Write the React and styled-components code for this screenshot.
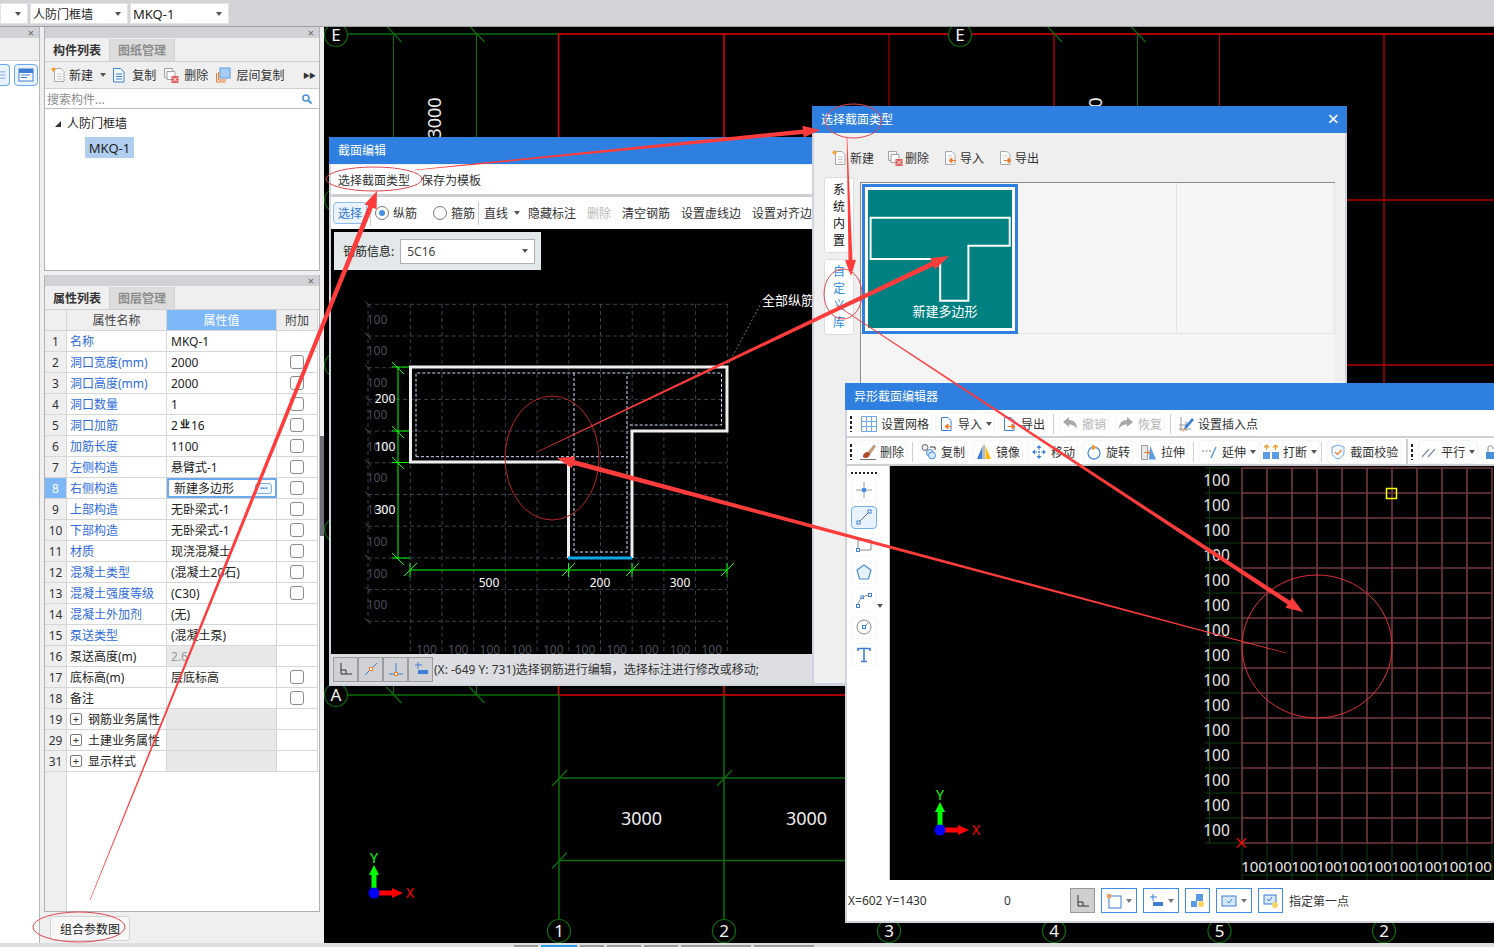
import React from "react";
import styled, { createGlobalStyle } from "styled-components";

const BLUE = "#2e7fe0";
const FONT = `"Noto Sans", "Noto Sans CJK SC", sans-serif`;

const Global = createGlobalStyle`
  html, body { margin: 0; padding: 0; background: #dcdde0; overflow: hidden; }
  * { box-sizing: border-box; }
  body { font-family: ${FONT}; font-size: 12px; color: #222; }
`;

const Page = styled.div`
  position: relative; width: 1494px; height: 947px; overflow: hidden;
  display: flex; flex-direction: column; background: #efefef;
`;
const TopBar = styled.div`
  height: 27px; flex: none; display: flex; gap: 2px; padding-top: 3px;
  background: #d2d4d8; border-bottom: 1px solid #9c9ea2;
`;
const Select = styled.div`
  width: ${p => p.$w}px; height: 21px; background: #fff; border: 1px solid #e4e4e4;
  display: flex; align-items: center; justify-content: space-between;
  padding: 0 6px 0 2px; font-size: 12px; color: #222; white-space: nowrap;
`;
const Latin = styled.span`font-size: 13px;`;
const Caret = styled.i`
  display: inline-block; width: 0; height: 0; flex: none; margin-left: ${p => p.$ml || 0}px;
  border-left: 3.5px solid transparent; border-right: 3.5px solid transparent;
  border-top: 4px solid ${p => p.$c || "#555"};
`;
const Workspace = styled.div`flex: 1; display: flex; min-height: 0;`;
const BottomBar = styled.div`
  height: 4px; flex: none; background: #dcdde0; display: flex; gap: 3px; padding: 2px 0 0 514px;
`;
const BottomTab = styled.i`
  display: block; width: ${p => p.$w}px; height: 2px; background: ${p => p.$on ? "#2e9be8" : "#9a9a9a"};
`;
const Stub = styled.div`
  width: 40px; flex: none; background: #fff; border-right: 1px solid #b4b6ba;
  display: flex; flex-direction: column;
`;
const PanelHead = styled.div`
  height: 11px; flex: none; background: #d0d2d6; display: flex; justify-content: flex-end;
  align-items: center; padding-right: 5px; font-size: 11px; line-height: 11px; color: #666;
`;
const StubBand = styled.div`height: 23px; flex: none; background: #efefef; border-bottom: 1px solid #cfcfcf;`;
const StubTools = styled.div`
  display: flex; justify-content: flex-end; gap: 4px; padding: 3px 1px 0 0;
`;
const StubBtn = styled.div`
  width: ${p => p.$w}px; height: 22px; border: 1px solid #69a8ec; border-left-width: ${p => p.$cut ? 0 : 1}px;
  border-radius: ${p => p.$cut ? "0 4px 4px 0" : "4px"}; background: #eaf3fe;
  display: flex; align-items: center; justify-content: center;
`;
const Sidebar = styled.div`
  width: 276px; flex: none; margin-left: 4px; display: flex; flex-direction: column;
`;
const Panel = styled.div`
  height: ${p => p.$h}px; flex: none; display: flex; flex-direction: column;
  margin-top: ${p => p.$mt || 0}px; background: #fff;
  border: 1px solid #b0b2b6; border-top: 0;
`;
const Tabs = styled.div`
  height: 24px; flex: none; display: flex; background: #efefef; border-bottom: 1px solid #cfcfcf; padding-top: 1px;
`;
const Tab = styled.div`
  width: 65px; display: flex; align-items: center; justify-content: center; font-weight: 700; font-size: 12px;
  color: ${p => p.$on ? "#333" : "#8d8d8d"}; background: ${p => p.$on ? "#f0f0f0" : "#dcdcdc"};
  border-right: 1px solid #d0d0d0;
`;
const SideTools = styled.div`
  height: 27px; flex: none; display: flex; align-items: center; background: #efefef;
  border-bottom: 1px solid #cfcfcf; padding-left: 6px; gap: 5px; position: relative;
`;
const More = styled.span`
  margin-left: auto; margin-right: 4px; font-size: 7px; color: #333; letter-spacing: -1px;
`;
const Search = styled.div`
  height: 20px; flex: none; display: flex; align-items: center; justify-content: space-between;
  padding: 0 6px 0 2px; color: #8d8d8d; border-bottom: 1px solid #bdbdbd; background: #fff;
`;
const Tree = styled.div`flex: 1; padding: 2px 0 0 10px; background: #fff;`;
const TreeRow = styled.div`height: 24px; margin-bottom: 2px; display: flex; align-items: center; gap: 6px;`;
const TreeMark = styled.i`
  width: 0; height: 0; border-left: 6px solid transparent; border-bottom: 6px solid #333; margin-top: 2px;
`;
const TreeLeaf = styled.div`
  margin-left: 30px; width: 49px; height: 21px; background: #b0cff0; display: flex; align-items: center; justify-content: center;
  color: #222; font-size: 13px;
`;
const Row = styled.div`
  display: grid; grid-template-columns: 22px 100px 110px 41px; height: 21px; flex: none;
  border-bottom: 1px solid #d6d6d6; width: 273px;
`;
const HeadCell = styled.div`
  display: flex; align-items: center; justify-content: center; font-size: 12px;
  background: ${p => p.$on ? "#7db7f8" : "#efefef"}; color: ${p => p.$on ? "#fff" : "#444"};
  border-right: 1px solid #d6d6d6;
`;
const Idx = styled.div`
  display: flex; align-items: center; justify-content: center; font-size: 12px;
  background: ${p => p.$on ? "#7db7f8" : "#efefef"}; color: ${p => p.$on ? "#fff" : "#333"};
  border-right: 1px solid #d6d6d6;
`;
const NameCell = styled.div`
  display: flex; align-items: center; gap: 6px; padding-left: 3px; white-space: nowrap; font-size: 12px;
  color: ${p => p.$link ? "#2f6bdc" : "#222"}; border-right: 1px solid #d6d6d6;
`;
const ValCell = styled.div`
  display: flex; align-items: center; padding-left: 4px; white-space: nowrap; font-size: 12px;
  color: ${p => p.$dim ? "#999" : "#222"}; background: ${p => p.$grey ? "#e8e8e8" : "#fff"};
  border-right: 1px solid #d6d6d6; position: relative;
  ${p => p.$sel && `outline: 2px solid #6aa9ee; outline-offset: -2px; padding-left: 7px; justify-content: space-between; padding-right: 4px;`}
`;
const DotsBtn = styled.span`
  width: 17px; height: 11px; border: 1px solid #7db0ea; border-radius: 3px; color: #3477d0; font-size: 10px; font-weight: 700;
  line-height: 8px; text-align: center; background: #eef5fd; letter-spacing: -.5px;
`;
const AddCell = styled.div`
  display: flex; align-items: center; justify-content: center; border-right: 1px solid #d6d6d6; background: #fff;
`;
const Check = styled.i`
  display: block; width: 14px; height: 14px; border: 1px solid #8b8b8b; border-radius: 3px; background: #fff;
`;
const Expand = styled.i`
  display: flex; width: 12px; height: 12px; border: 1px solid #777; border-radius: 2px; font-style: normal;
  align-items: center; justify-content: center; font-size: 11px; line-height: 10px; color: #333; flex: none;
`;
const Sym = styled.span`font-size: 10px; margin: -3px 1px 0 2px; font-weight: 700;`;
const Filler = styled.div`
  flex: 1; width: 22px; background: #efefef; border-right: 1px solid #d6d6d6;
`;
const BtnRow = styled.div`height: 31px; flex: none; padding: 4px 0 0 6px; background: #efefef;`;
const ParamBtn = styled.div`
  width: 80px; height: 25px; background: #f7f7f7; border: 1px solid #d4d4d4; border-radius: 3px;
  display: flex; align-items: center; justify-content: center; color: #222;
`;
const Gutter = styled.div`width: 4px; flex: none; background: #efefef; padding-top: 409px;`;
const GutterHandle = styled.div`height: 100px; background: #6d7077;`;
const Canvas = styled.div`flex: 1; background: #000; min-width: 0;`;
const Drawing = styled.svg`display: block;`;
const IconSvg = styled.svg`display: block; flex: none;`;

const Win = styled.div`
  position: absolute; left: ${p => p.$x}px; top: ${p => p.$y}px; width: ${p => p.$w}px; height: ${p => p.$h}px;
  z-index: ${p => p.$z}; background: #efefef; display: flex; flex-direction: column;
  border-left: 2px solid #cfd3dc; border-right: 2px solid #cfd3dc; border-bottom: 2px solid #cfd3dc;
`;
const TitleBar = styled.div`
  height: 27px; flex: none; margin: 0 -2px; background: ${BLUE}; color: #fff; font-size: 12px;
  display: flex; align-items: center; justify-content: space-between; padding: 0 8px 2px 9px;
`;
const CloseX = styled.span`font-size: 20px; line-height: 20px; color: #fff;`;
const MenuRow = styled.div`
  height: 32px; flex: none; background: #fff; border-bottom: 3px solid #cdd0d5; display: flex; align-items: center;
  padding: 1px 0 0 7px; gap: 11px; margin-top: 1px;
`;
const W1Tools = styled.div`
  height: 32px; flex: none; background: #fff; display: flex; align-items: center; padding-left: 2px; white-space: nowrap; overflow: hidden;
`;
const Plain = styled.span`margin-left: ${p => p.$ml || 0}px; color: ${p => p.$dim ? "#b9b9b9" : "#333"}; flex: none; display: inline-flex; align-items: center;`;
const ActiveTool = styled.span`
  width: 34px; height: 22px; display: inline-flex; align-items: center; justify-content: center; flex: none;
  border: 1px solid #8dbcf0; border-radius: 4px; background: #eaf3fe; color: #2f78d4;
`;
const Radio = styled.i`
  width: 14px; height: 14px; flex: none; border-radius: 50%; border: 1px solid #777; background: #fff; margin-left: ${p => p.$ml}px; margin-right: 4px;
  display: flex; align-items: center; justify-content: center;
  &::after { content: ""; width: 6px; height: 6px; border-radius: 50%; background: ${p => p.$on ? "#4a90e2" : "transparent"}; }
`;
const Sep = styled.i`
  width: 1px; height: ${p => p.$h || 20}px; flex: none; background: #cfcfcf; margin-left: ${p => p.$ml || 0}px;
`;
const W1Canvas = styled.div`flex: 1; position: relative; background: #000; overflow: hidden;`;
const InfoBox = styled.div`
  position: absolute; left: 3px; top: 3px; width: 207px; height: 38px; background: #e3e8ea;
  display: flex; align-items: center; padding-left: 9px; gap: 6px; color: #222;
`;
const InfoSelect = styled.div`
  width: 135px; height: 25px; background: #fff; border: 1px solid #b0b0b0; display: flex; align-items: center;
  justify-content: space-between; padding: 0 6px; color: #444;
`;
const W1Status = styled.div`
  height: 30px; flex: none; background: #dddee2; display: flex; align-items: center; padding-left: 2px; color: #222; white-space: nowrap; font-size: 12px;
`;
const StatusBtn = styled.div`
  width: 25px; height: 25px; flex: none; border: 1px solid #9d9d9d; background: #d0d1d5; display: flex; align-items: center; justify-content: center;
`;
const W2Tools = styled.div`
  height: 49px; flex: none; padding-left: 18px; display: flex; align-items: center; gap: 13px;
`;
const W2Tool = styled.div`display: flex; align-items: center; gap: 2px; color: #333; margin-left: ${p => p.$ml || 0}px;`;
const W2Body = styled.div`flex: 1; display: flex; padding-left: 10px; min-height: 0;`;
const SideCol = styled.div`width: 36px; flex: none; display: flex; flex-direction: column; gap: 6px; margin-top: -5px;`;
const SideTab = styled.div`
  width: 30px; height: ${p => p.$h}px; background: #fff; border: 1px solid #ddd; border-radius: 3px;
  display: flex; flex-direction: column; align-items: center; justify-content: center; line-height: 17px;
  color: ${p => p.$on ? "#2f8fe8" : "#111"}; font-size: 12px;
`;
const Gallery = styled.div`
  width: 475px; height: 210px; background: #f5f5f5; border-top: 1px solid #8a8c90; border-left: 1px solid #8a8c90;
  display: grid; grid-template-columns: 157px 159px 158px; grid-template-rows: 151px 1fr;
`;
const Cell = styled.div`
  border-right: 1px solid #e2e2e2; border-bottom: 1px solid #e2e2e2; padding: 1px 0 0 1px;
`;
const SelFrame = styled.div`
  width: 156px; height: 150px; border: 3px solid ${BLUE}; background: #fff; padding: 3px;
`;
const Thumb = styled.div`
  position: relative; width: 144px; height: 138px; background: #008080; overflow: hidden;
`;
const ThumbText = styled.span`
  position: absolute; left: 0; width: 154px; top: 111px; text-align: center; color: #fff; font-size: 13px;
`;
const W3Tools = styled.div`
  height: 28px; flex: none; background: #fff; display: flex; align-items: center; gap: ${p => p.$gap}px;
  border-bottom: 2px solid #cdd0d5; white-space: nowrap; overflow: hidden; padding: 2px 0 0 3px;
`;
const Grip = styled.i`
  width: 2px; height: 16px; flex: none; margin-right: ${p => p.$mr || 0}px; margin-left: ${p => p.$ml || 0}px;
  background-image: repeating-linear-gradient(to bottom, #222 0 3px, transparent 3px 5px);
`;
const Tool = styled.div`
  display: inline-flex; align-items: center; flex: none; height: 24px; padding: 0 2px; gap: 4px; margin-left: ${p => p.$ml || 0}px;
  border: 1px solid #f6f6f6; border-radius: 3px; color: ${p => p.$dim ? "#b5b5b5" : "#333"}; font-size: 12px;
`;
const EndBar = styled.i`width: 2px; height: 26px; flex: none; background: #cdd0d5;`;
const W3Body = styled.div`flex: 1; display: flex; min-height: 0;`;
const ToolCol = styled.div`
  width: 43px; flex: none; background: #fff; border-right: 1px solid #c8c8c8; display: flex; flex-direction: column;
  align-items: flex-start; gap: 4px; padding: 6px 0 0 4px;
`;
const DotGrip = styled.i`
  width: 26px; height: 2px; flex: none; 
  background-image: repeating-linear-gradient(to right, #222 0 2px, transparent 2px 4px);
`;
const ColBtn = styled.div`
  width: 26px; height: 23.5px; flex: none; display: flex; align-items: center; justify-content: center; position: relative;
  border: 1px solid ${p => p.$on ? "#73aef0" : "#f6f6f6"}; border-radius: 4px; background: ${p => p.$on ? "#e8f2fd" : "#fff"};
`;
const ColCaret = styled.span`position: absolute; right: -7px; top: 6px;`;
const W3Canvas = styled.div`flex: 1; background: #000; min-width: 0;`;
const W3Status = styled.div`
  height: 43px; flex: none; background: #fff; display: flex; align-items: center; gap: 6px; padding-left: 1px; border-bottom: 2px solid #cfd3dc; color: #333;
  margin-bottom: -2px;
`;
const Coord = styled.span`width: ${p => p.$w}px; flex: none; white-space: nowrap;`;
const StBtn = styled.div`
  width: ${p => p.$w}px; height: 25px; flex: none; display: flex; align-items: center; justify-content: center; gap: 4px;
  border: 1px solid ${p => p.$on ? "#999" : "#3d8fe6"}; background: ${p => p.$on ? "#cfcfcf" : "#fff"};
`;
const Overlay = styled.svg`
  position: absolute; left: 0; top: 0; width: 1494px; height: 947px; z-index: 9; pointer-events: none;
`;

/* ---------- icons ---------- */
const I = ({ s = 16, children }) => (
  <IconSvg width={s} height={s} viewBox="0 0 16 16" fill="none">{children}</IconSvg>
);
const Page16 = ({ c = "#a8a8a8" }) => (
  <path d="M3.500 1.500h6.500l3 3v10h-9.500z" fill="#fbfbfb" stroke={c} />
);
const NewIcon = () => (
  <I><Page16 /><path d="M6 7h5M6 9.500h5M6 12h5" stroke="#c8c8c8" /><path d="M1 1h3v3H1z" fill="#f6a53c" /><path d="M0 2.500h5M2.500 0v5" stroke="#f39c2d" strokeWidth=".7" /></I>
);
const CopyIcon = () => (
  <I><path d="M2.500 1.500h7l3.500 3.500v10h-10.500z" fill="#f4f8fe" stroke="#3d7fd4" /><path d="M5 7h6M5 9.500h6M5 12h6" stroke="#3d7fd4" /></I>
);
const DelIcon = () => (
  <I><path d="M1.500 1.500h8v9h-8z" fill="#f5f5f5" stroke="#a3a3a3" /><path d="M4 4.500h8v8h-8z" fill="#fbfbfb" stroke="#a3a3a3" /><rect x="8.500" y="9" width="7" height="7" fill="#e05a5a" /><path d="M10 10.500l4 4M14 10.500l-4 4" stroke="#fff" /></I>
);
const LayerIcon = () => (
  <I><path d="M1.500 6v9h9" stroke="#f07d2a" strokeWidth="1" /><path d="M3.500 5v8h8" stroke="#f07d2a" /><rect x="5" y="1" width="10" height="10" fill="#a8cdf5" stroke="#5a9be3" /></I>
);
const ImportIcon = ({ blue }) => (
  <I><Page16 c={blue ? "#3d7fd4" : "#a8a8a8"} />{!blue && <path d="M6 6h4M6 8.500h1" stroke="#c8c8c8" />}<path d="M14 10.500H10M10 8l-3 2.500 3 2.500z" fill="#f07d2a" stroke="#f07d2a" /></I>
);
const ExportIcon = ({ blue }) => (
  <I><Page16 c={blue ? "#3d7fd4" : "#a8a8a8"} />{!blue && <path d="M6 6h4M6 8.500h1" stroke="#c8c8c8" />}<path d="M7 10.500h4M11 8l3 2.500-3 2.500z" fill="#f07d2a" stroke="#f07d2a" /></I>
);
const SearchIcon = () => (
  <I s={12}><circle cx="6.500" cy="6.500" r="4" stroke="#4a90d6" strokeWidth="2" /><path d="M10 10l4 4" stroke="#4a90d6" strokeWidth="2.500" /></I>
);
const GridIcon = () => (
  <I><path d="M.500.500h15v15H.500zM5.500.500v15M10.500.500v15M.500 5.500h15M.500 10.500h15" stroke="#6ea6e6" /></I>
);
const UndoIcon = ({ flip }) => (
  <I><g transform={flip ? "translate(16 0) scale(-1 1)" : undefined}><path d="M1 6l6-5v3c5 0 8 3 8 9-1.500-3-4-4.500-8-4.500V11z" fill="#a8a8a8" /></g></I>
);
const InsertIcon = () => (
  <I><path d="M3 1v14M8 5v10M1 9h9M1 13h12" stroke="#9a9a9a" /><path d="M7 10l7-8 2 2-7 8-3 1z" fill="#3d7fd4" /><path d="M5 15.500l2-3" stroke="#f07d2a" /></I>
);
const BrushIcon = () => (
  <I><path d="M8 8l6-7 1.500 1.500L10 10z" fill="#c9a27a" stroke="#8a6a45" strokeWidth=".5" /><path d="M8 8c-3 0-5 2-5 5l2 1c3 0 5-2 5-4z" fill="#b5482a" /><path d="M0 15.500h16" stroke="#777" /></I>
);
const DupIcon = () => (
  <I><circle cx="4" cy="3.500" r="3" fill="#eee" stroke="#666" /><circle cx="9" cy="9" r="3.500" fill="#d6e8fb" stroke="#4a90d6" /><circle cx="11" cy="11.500" r="3.500" fill="#d6e8fb" stroke="#4a90d6" /><path d="M9 3h5v3" stroke="#333" /></I>
);
const MirrorIcon = () => (
  <I><path d="M6.500 2v13H1z" fill="#3d7fd4" /><path d="M9.500 2v13H15z" fill="#f9b80c" /><path d="M8 1v14.500" stroke="#777" /></I>
);
const MoveIcon = () => (
  <I><path d="M8 1l2.500 3h-5zM8 15l2.500-3h-5zM1 8l3-2.500v5zM15 8l-3-2.500v5z" fill="#3d7fd4" /><path d="M4 8h8M8 4v8" stroke="#3d7fd4" strokeDasharray="2 1" /></I>
);
const RotateIcon = () => (
  <I><circle cx="8" cy="9" r="6" stroke="#4a90d6" strokeWidth="1.300" /><path d="M6 .500l5 3-5 3z" fill="#f39c2d" /></I>
);
const StretchIcon = () => (
  <I><path d="M.500 1.500h6v14h-6z" fill="#e9e9e9" stroke="#9a9a9a" /><path d="M9 1.500l6 14H8z" fill="#5a9be3" /><path d="M3 8.500h6M7 6.500l2 2-2 2" stroke="#f07d2a" /></I>
);
const ExtendIcon = () => (
  <I><path d="M0 7h10" stroke="#777" strokeDasharray="2 1.500" /><path d="M9 14l5-11" stroke="#4a90d6" strokeWidth="1.300" /></I>
);
const BreakIcon = () => (
  <I><rect x="0" y="8" width="7" height="7" fill="#5a9be3" /><rect x="9" y="8" width="7" height="7" fill="#5a9be3" /><path d="M3.500 1v5M1 3.500l2.500-2.500 2.500 2.500M12.500 1v5M10 3.500L12.500 1 15 3.500" stroke="#f39c2d" strokeWidth="1.200" /></I>
);
const ShieldIcon = () => (
  <I><path d="M8 1l6 2v5c0 3.500-2.500 6-6 7-3.500-1-6-3.500-6-7V3z" fill="#f2f7fd" stroke="#6ea6e6" /><path d="M5 8l2.500 2.500L11.500 6" stroke="#f07d2a" strokeWidth="1.200" /></I>
);
const ParallelIcon = () => (
  <I><path d="M1 13L8 5M7 13l7-8" stroke="#7a8eaa" strokeWidth="1.200" /></I>
);
const LockIcon = () => (
  <I><rect x="3" y="8" width="9" height="7" fill="#4a90d6" /><path d="M5 8V4c0-3 5-3 5 0v1" stroke="#888" /></I>
);
const PointTool = () => (
  <I><path d="M0 8h5M11 8h5M8 0v5M8 11v5" stroke="#9a9a9a" /><circle cx="8" cy="8" r="2.500" fill="#4a90e2" /></I>
);
const LineTool = () => (
  <I><path d="M3 13L13 3" stroke="#666" /><rect x="1" y="12" width="3" height="3" fill="#fff" stroke="#3d7fd4" /><rect x="12" y="1" width="3" height="3" fill="#fff" stroke="#3d7fd4" /></I>
);
const RectTool = () => (
  <I><path d="M2 3h13v10H2z" stroke="#888" /><rect x=".500" y="11.500" width="3" height="3" fill="#fff" stroke="#3d7fd4" /></I>
);
const PentaTool = () => (
  <I><path d="M8 1l7 5-2.500 9h-9L1 6z" fill="#e8f2fd" stroke="#4a90d6" strokeWidth="1.200" /></I>
);
const ArcTool = () => (
  <I><path d="M2 14C2 8 7 3 14 3" stroke="#888" /><rect x=".500" y="12.500" width="3" height="3" fill="#fff" stroke="#3d7fd4" /><rect x="5" y="4" width="2.500" height="2.500" fill="#fff" stroke="#3d7fd4" /><rect x="12.500" y="1.500" width="3" height="3" fill="#fff" stroke="#3d7fd4" /></I>
);
const CircleTool = () => (
  <I><circle cx="8" cy="8" r="7" stroke="#888" /><path d="M8 8l4-4" stroke="#888" /><rect x="6.500" y="6.500" width="3" height="3" fill="#fff" stroke="#3d7fd4" /></I>
);
const TTool = () => (
  <I><path d="M2 4V1.500h12V4M8 1.500v13M5 14.500h6" stroke="#3d7fd4" strokeWidth="1.600" /></I>
);

/* ---------- data ---------- */
const rows = [
  ["1", "名称", "MKQ-1", 1, 0],
  ["2", "洞口宽度(mm)", "2000", 1, 1],
  ["3", "洞口高度(mm)", "2000", 1, 1],
  ["4", "洞口数量", "1", 1, 1],
  ["5", "洞口加筋", "rebar", 1, 1],
  ["6", "加筋长度", "1100", 1, 1],
  ["7", "左侧构造", "悬臂式-1", 1, 1],
  ["8", "右侧构造", "新建多边形", 1, 1, "sel"],
  ["9", "上部构造", "无卧梁式-1", 1, 1],
  ["10", "下部构造", "无卧梁式-1", 1, 1],
  ["11", "材质", "现浇混凝土", 1, 1],
  ["12", "混凝土类型", "(混凝土20石)", 1, 1],
  ["13", "混凝土强度等级", "(C30)", 1, 1],
  ["14", "混凝土外加剂", "(无)", 1, 0],
  ["15", "泵送类型", "(混凝土泵)", 1, 0],
  ["16", "泵送高度(m)", "2.6", 0, 0, "dim"],
  ["17", "底标高(m)", "层底标高", 0, 1],
  ["18", "备注", "", 0, 1],
  ["19", "钢筋业务属性", "", 0, 0, "group"],
  ["29", "土建业务属性", "", 0, 0, "group"],
  ["31", "显示样式", "", 0, 0, "group"],
];

const range = (n) => Array.from({ length: n }, (_, i) => i);

/* ---------- main CAD background ---------- */
const G = "#0b6e0b";
const R = "#e00000";
const Slash = ({ x, y, d = 1 }) => (
  <line x1={x - 7} y1={y - 8 * d} x2={x + 8} y2={y + 8 * d} stroke={G} strokeWidth="1.200" />
);
const Bubble = ({ x, y, t, fs = 17 }) => (
  <g>
    <circle cx={x} cy={y} r="11.500" fill="#000" stroke={G} strokeWidth="1.200" />
    <text x={x} y={y + 6} textAnchor="middle" fill="#f4f4f4" fontSize={fs} fontFamily={FONT}>{t}</text>
  </g>
);
const Axes = ({ x, y, lf = 14 }) => (
  <g>
    <path d={`M${x} ${y}V${y - 20}`} stroke="#00ff00" strokeWidth="5" />
    <path d={`M${x - 5} ${y - 18}L${x} ${y - 28}L${x + 5} ${y - 18}z`} fill="#00ff00" />
    <path d={`M${x} ${y}H${x + 20}`} stroke="#ff0000" strokeWidth="5" />
    <path d={`M${x + 18} ${y - 5}L${x + 29} ${y}L${x + 18} ${y + 5}z`} fill="#ff0000" />
    <circle cx={x} cy={y} r="5.500" fill="#0000ff" />
    <text x={x} y={y - 30} textAnchor="middle" fill="#00ff00" fontSize={lf} fontFamily={FONT}>Y</text>
    <text x={x + 36} y={y + 5} textAnchor="middle" fill="#ff0000" fontSize={lf} fontFamily={FONT}>X</text>
  </g>
);
const MainCad = () => (
  <Drawing width="1170" height="916" viewBox="324 27 1170 916" fill="none">
    {[393.5, 476.5].map(x => <path key={x} d={`M${x} 34V140`} stroke={G} strokeWidth="1" />)}
    <path d="M324 34H558" stroke={G} strokeWidth="1.500" />
    <path d="M558 34H1494" stroke={R} strokeWidth="1.500" />
    <path d="M558.500 34V695" stroke={R} strokeWidth="1.500" />
    <path d="M724 34V695" stroke={R} strokeWidth="1.500" />
    {[889, 1054, 1219.5, 1384].map((x, i) => <path key={x} d={`M${x} 34V400`} stroke={i === 1 || i === 3 ? "#ff0000" : "#c00000"} strokeWidth="1" />)}
    <path d="M1137.500 34V140" stroke={G} strokeWidth="1" />
    <path d="M558 200H1494M558 365H1494" stroke="#b00000" strokeWidth="1.500" />
    <path d="M324 695H559" stroke={G} strokeWidth="1.500" />
    <path d="M559 695H1494" stroke={R} strokeWidth="1.500" />
    <path d="M393.500 686V695M476.500 686V695" stroke={G} />
    <path d="M559 695V920M724 695V920" stroke={G} strokeWidth="1.500" />
    <path d="M559 778H1494M559 860.500H1494" stroke={G} strokeWidth="1.300" />
    {[[393.5, 34], [476.5, 34], [1054, 34], [1137.5, 34], [393.5, 695], [476.5, 695]].map(([x, y]) => <Slash key={x + "-" + y} x={x} y={y} />)}
    {[[559, 778], [724, 778], [559, 860.5]].map(([x, y]) => <Slash key={x + "-" + y} x={x} y={y} d={-1} />)}
    {[200, 365, 530].map(y => <circle key={y} cx="336" cy={y} r="11.500" stroke={G} strokeWidth="1.200" />)}
    <Bubble x={336} y={35} t="E" />
    <Bubble x={960} y={35} t="E" />
    <Bubble x={336} y={695} t="A" />
    {[[559, "1"], [724, "2"], [889, "3"], [1054, "4"], [1219.5, "5"], [1384, "2"]].map(([x, t]) => <Bubble key={x} x={x} y={931} t={t} />)}
    <text x="641.500" y="825" textAnchor="middle" fill="#eee" fontSize="18" fontFamily={FONT}>3000</text>
    <text x="806.500" y="825" textAnchor="middle" fill="#eee" fontSize="18" fontFamily={FONT}>3000</text>
    <text transform="translate(441 118) rotate(-90)" textAnchor="middle" fill="#eee" fontSize="18" fontFamily={FONT}>3000</text>
    <text transform="translate(1102 118) rotate(-90)" textAnchor="middle" fill="#eee" fontSize="18" fontFamily={FONT}>3000</text>
    <Axes x={374} y={893} />
  </Drawing>
);

/* ---------- 截面编辑 canvas ---------- */
const gx = range(11).map(i => 410.3 + i * 31.7);
const gy = range(11).map(i => 304.3 + i * 31.7);
const DIM = "#00ff00";
const Gt = ({ x, y, t, c = "#4a4f5a", fs = 12 }) => (
  <text x={x} y={y} textAnchor="middle" fill={c} fontSize={fs} fontFamily={FONT}>{t}</text>
);
const SectionCad = () => (
  <Drawing width="560" height="425" viewBox="331 229 560 425" fill="none">
    <g stroke="#3a404e" strokeWidth="1" strokeDasharray="4 3">
      {gy.map(y => <line key={y} x1="368" y1={y} x2="727" y2={y} />)}
      {gx.map(x => <line key={x} x1={x} y1="304" x2={x} y2="654" />)}
      <line x1="368" y1="304" x2="368" y2="621" />
    </g>
    {gy.map(y => <path key={y} d={`M365 ${y - 3}l6 6`} stroke="#4a4f5a" />)}
    {[324, 355, 387, 419, 451, 482, 514, 546, 578, 609].map(y => <Gt key={y} x={377} y={y} t="100" />)}
    {range(10).map(i => <Gt key={i} x={426.500 + i * 31.700} y={654} t="100" />)}
    <path d="M398 367V558M392 367H410M392 431H410M392 462.500H410M392 558H410" stroke={DIM} />
    <path d="M392 362l12 12M392 426l12 12M392 457l12 12M392 553l12 12" stroke={DIM} />
    <path d="M410 570H727M410 563V577M568.500 563V577M632 563V577M727 563V577" stroke={DIM} />
    <path d="M404 576l13-13M562 576l13-13M626 576l13-13M721 576l13-13" stroke={DIM} />
    <Gt x={385} y={403} t="200" c="#fff" />
    <Gt x={385} y={451} t="100" c="#fff" />
    <Gt x={385} y={514} t="300" c="#fff" />
    <Gt x={489} y={587} t="500" c="#fff" />
    <Gt x={600} y={587} t="200" c="#fff" />
    <Gt x={680} y={587} t="300" c="#fff" />
    <path d="M727 367L760 305" stroke="#777" strokeDasharray="2 2" />
    <text x="762" y="305" fill="#fff" fontSize="13" fontFamily={FONT}>全部纵筋</text>
    <path d="M416 456.700V373H721.500V425H627M416 456.700H627M574 373V552H627V373" stroke="#cfe0ff" strokeDasharray="3 2" />
    <path d="M568.500 558V462H410.500V367H727V431H632V558" stroke="#eee" strokeWidth="3" />
    <path d="M568 558H632" stroke="#11a8e8" strokeWidth="3" />
  </Drawing>
);

/* ---------- 异形截面 canvas ---------- */
const wgx = range(11).map(i => 1242 + i * 25);
const wgy = range(16).map(i => 468 + i * 25);
const ShapeCad = () => (
  <Drawing width="604" height="414" viewBox="890 466 604 414" fill="none">
    <g stroke="#0f3d0f" strokeWidth="1">
      <path d="M1209.500 468V843" />
      {wgy.map(y => <path key={y} d={`M1205 ${y}H1242`} />)}
      {wgx.map(x => <path key={x} d={`M${x} 843V880`} />)}
      <path d="M1242 875H1492" />
    </g>
    <g stroke="#733a40" strokeWidth="1.600">
      {wgx.map(x => <line key={x} x1={x} y1="468" x2={x} y2="843" />)}
      {wgy.map(y => <line key={y} x1="1242" y1={y} x2="1492" y2={y} />)}
    </g>
    {range(15).map(i => <text key={i} x="1216.500" y={486 + i * 25} textAnchor="middle" fill="#e8e8e8" fontSize="15.500" fontFamily={FONT}>100</text>)}
    {range(10).map(i => <text key={i} x={1254 + i * 25} y="872" textAnchor="middle" fill="#e8e8e8" fontSize="15" fontFamily={FONT}>100</text>)}
    <rect x="1386.500" y="488.500" width="10" height="10" stroke="#ffff00" strokeWidth="1.500" />
    <path d="M1237 838.500l9 9M1246 838.500l-9 9" stroke="#ff0000" strokeWidth="1.300" />
    <Axes x={940} y={830} />
  </Drawing>
);

/* ---------- annotation arrows ---------- */
const arrowPts = ([x1, y1], [x2, y2], neck = 4.5, head = 12, len = 16) => {
  const L = Math.hypot(x2 - x1, y2 - y1), ux = (x2 - x1) / L, uy = (y2 - y1) / L, nx = -uy, ny = ux;
  const bx = x2 - ux * len, by = y2 - uy * len;
  const p = (x, y) => `${x.toFixed(1)},${y.toFixed(1)}`;
  return [
    p(x1 + nx * .3, y1 + ny * .3), p(bx + nx * neck / 2, by + ny * neck / 2), p(bx + nx * head / 2, by + ny * head / 2),
    p(x2, y2), p(bx - nx * head / 2, by - ny * head / 2), p(bx - nx * neck / 2, by - ny * neck / 2), p(x1 - nx * .3, y1 - ny * .3),
  ].join(" ");
};
const AC = "#ff3c3c";
const arrows = [
  [[90, 900], [377, 191], 5, 13, 17],
  [[415, 170], [820, 130], 4.5, 12, 17],
  [[847, 138], [851, 276], 4, 11, 16],
  [[537, 452], [949, 256], 5, 12, 18],
  [[836, 305], [1303, 612], 4.5, 12, 17],
  [[1286, 653], [557, 458], 5, 12, 17],
];
const rings = [
  [374, 179, 48, 12, "#e0474f"], [853.5, 121, 28, 17, "#e0474f"], [843, 294, 19, 25, "#e0474f"],
  [1317, 646.5, 75, 71.5, "#e0303a"], [79, 927, 46, 15, "#e0474f"], [552, 458, 47, 62, "#b82428"],
];

export default function App() {
  return (
    <Page>
      <Global />
      <TopBar>
        <Select $w={28}><span /><Caret /></Select>
        <Select $w={98}>人防门框墙<Caret /></Select>
        <Select $w={99}><Latin>MKQ-1</Latin><Caret /></Select>
      </TopBar>
      <Workspace>
        <Stub>
          <PanelHead>×</PanelHead>
          <StubBand />
          <StubTools>
            <StubBtn $w={10} $cut><I s={10}><path d="M0 3h9M0 8h9M0 13h9" stroke="#3d7fd4" /></I></StubBtn>
            <StubBtn $w={24}>
              <I s={16}><rect x="1" y="2" width="14" height="12" fill="#fff" stroke="#3d7fd4" /><rect x="1" y="2" width="14" height="4" fill="#3d7fd4" /><path d="M3 8h9M3 10.500h6" stroke="#3d7fd4" /></I>
            </StubBtn>
          </StubTools>
        </Stub>
        <Sidebar>
          <Panel $h={244}>
            <PanelHead>×</PanelHead>
            <Tabs><Tab $on>构件列表</Tab><Tab>图纸管理</Tab></Tabs>
            <SideTools>
              <W2Tool><NewIcon />新建<Caret $ml={5} /></W2Tool>
              <W2Tool><CopyIcon /><span>&nbsp;复制</span></W2Tool>
              <W2Tool $ml={2}><DelIcon /><span>&nbsp;删除</span></W2Tool>
              <W2Tool $ml={2}><LayerIcon /><span>&nbsp;层间复制</span></W2Tool>
              <More>▶▶</More>
            </SideTools>
            <Search>搜索构件...<SearchIcon /></Search>
            <Tree>
              <TreeRow><TreeMark />人防门框墙</TreeRow>
              <TreeLeaf>MKQ-1</TreeLeaf>
            </Tree>
          </Panel>
          <Panel $h={637} $mt={4}>
            <PanelHead>×</PanelHead>
            <Tabs><Tab $on>属性列表</Tab><Tab>图层管理</Tab></Tabs>
            <Row>
              <HeadCell />
              <HeadCell>属性名称</HeadCell>
              <HeadCell $on>属性值</HeadCell>
              <HeadCell>附加</HeadCell>
            </Row>
            {rows.map(([n, name, val, link, chk, kind]) => (
              <Row key={n}>
                <Idx $on={kind === "sel"}>{n}</Idx>
                <NameCell $link={!!link}>
                  {kind === "group" && <Expand>+</Expand>}
                  {name}
                </NameCell>
                <ValCell $sel={kind === "sel"} $dim={kind === "dim"} $grey={kind === "dim" || kind === "group"}>
                  {val === "rebar" ? <>2<Sym>业</Sym>16</> : val}
                  {kind === "sel" && <DotsBtn>···</DotsBtn>}
                </ValCell>
                <AddCell>{chk ? <Check /> : null}</AddCell>
              </Row>
            ))}
            <Filler />
          </Panel>
          <BtnRow><ParamBtn>组合参数图</ParamBtn></BtnRow>
        </Sidebar>
        <Gutter><GutterHandle /></Gutter>
        <Canvas><MainCad /></Canvas>
      </Workspace>
      <BottomBar>
        <BottomTab $w={24} /><BottomTab $w={36} $on /><BottomTab $w={24} /><BottomTab $w={34} /><BottomTab $w={34} /><BottomTab $w={70} /><BottomTab $w={60} />
      </BottomBar>

      <Win $x={329} $y={137} $w={560} $h={549} $z={1}>
        <TitleBar>截面编辑</TitleBar>
        <MenuRow><Plain>选择截面类型</Plain><Plain>保存为模板</Plain></MenuRow>
        <W1Tools>
          <ActiveTool>选择</ActiveTool>
          <Sep $ml={3} $h={26} />
          <Radio $ml={4} $on />
          <Plain>纵筋</Plain>
          <Radio $ml={16} />
          <Plain>箍筋</Plain>
          <Sep $ml={3} $h={24} />
          <Plain $ml={5}>直线<Caret $ml={6} /></Plain>
          <Plain $ml={8}>隐藏标注</Plain>
          <Plain $ml={11} $dim>删除</Plain>
          <Plain $ml={11}>清空钢筋</Plain>
          <Plain $ml={11}>设置虚线边</Plain>
          <Plain $ml={11}>设置对齐边</Plain>
        </W1Tools>
        <W1Canvas>
          <SectionCad />
          <InfoBox>
            <span>钢筋信息:</span>
            <InfoSelect>5C16<Caret /></InfoSelect>
          </InfoBox>
        </W1Canvas>
        <W1Status>
          <StatusBtn><I><path d="M3 2v11h11M3 9h5v4" stroke="#333" /></I></StatusBtn>
          <StatusBtn><I><path d="M2 14L14 2" stroke="#3d7fd4" /><rect x="6.500" y="6.500" width="3" height="3" fill="#fff" stroke="#f07d2a" /></I></StatusBtn>
          <StatusBtn><I><path d="M1 13h14M8 2v11" stroke="#3d7fd4" /><rect x="6.500" y="11.500" width="3" height="3" fill="#fff" stroke="#f07d2a" /></I></StatusBtn>
          <StatusBtn><I><path d="M2 4h7M5 1v7" stroke="#3d7fd4" /><rect x="5" y="9" width="10" height="4" fill="#3d7fd4" /></I></StatusBtn>
          <Plain $ml={1}>(X: -649 Y: 731)选择钢筋进行编辑，选择标注进行修改或移动;</Plain>
        </W1Status>
      </Win>

      <Win $x={812} $y={106} $w={535} $h={579} $z={2}>
        <TitleBar>选择截面类型<CloseX>×</CloseX></TitleBar>
        <W2Tools>
          <W2Tool><NewIcon />新建</W2Tool>
          <W2Tool><DelIcon />删除</W2Tool>
          <W2Tool><ImportIcon />导入</W2Tool>
          <W2Tool><ExportIcon />导出</W2Tool>
        </W2Tools>
        <W2Body>
          <SideCol>
            <SideTab $h={76}>{["系", "统", "内", "置"].map(c => <span key={c}>{c}</span>)}</SideTab>
            <SideTab $h={76} $on>{["自", "定", "义", "库"].map(c => <span key={c}>{c}</span>)}</SideTab>
          </SideCol>
          <Gallery>
            <Cell>
              <SelFrame>
                <Thumb>
                  <Drawing width="144" height="138" viewBox="868 190 144 138" fill="none">
                    <path d="M870.600 217.700H1009.700V245.700H968.400V300.700H940.200V259H870.600z" stroke="#fff" strokeWidth="2" />
                  </Drawing>
                  <ThumbText>新建多边形</ThumbText>
                </Thumb>
              </SelFrame>
            </Cell>
            <Cell /><Cell />
          </Gallery>
        </W2Body>
      </Win>

      <Win $x={845} $y={383} $w={660} $h={540} $z={3}>
        <TitleBar>异形截面编辑器</TitleBar>
        <W3Tools $gap={3}>
          <Grip $mr={3} />
          <Tool><GridIcon />设置网格</Tool>
          <Tool><ImportIcon blue />导入<Caret $ml={0} /></Tool>
          <Tool><ExportIcon blue />导出</Tool>
          <Sep $ml={2} />
          <Tool $dim $ml={2}><UndoIcon />撤销</Tool>
          <Tool $dim $ml={3}><UndoIcon flip />恢复</Tool>
          <Sep $ml={2} />
          <Tool $ml={1}><InsertIcon />设置插入点</Tool>
        </W3Tools>
        <W3Tools $gap={5}>
          <Grip />
          <Tool><BrushIcon />删除</Tool>
          <Sep />
          <Tool><DupIcon />复制</Tool>
          <Tool><MirrorIcon />镜像</Tool>
          <Tool><MoveIcon />移动</Tool>
          <Tool><RotateIcon />旋转</Tool>
          <Tool><StretchIcon />拉伸</Tool>
          <Sep />
          <Tool><ExtendIcon />延伸<Caret /></Tool>
          <Tool $ml={-4}><BreakIcon />打断<Caret /></Tool>
          <Sep $ml={-4} />
          <Tool><ShieldIcon />截面校验</Tool>
          <EndBar />
          <Grip $ml={-2} />
          <Tool><ParallelIcon />平行<Caret /></Tool>
          <LockIcon />
        </W3Tools>
        <W3Body>
          <ToolCol>
            <DotGrip />
            <ColBtn><PointTool /></ColBtn>
            <ColBtn $on><LineTool /></ColBtn>
            <ColBtn><RectTool /></ColBtn>
            <ColBtn><PentaTool /></ColBtn>
            <ColBtn><ArcTool /><ColCaret><Caret /></ColCaret></ColBtn>
            <ColBtn><CircleTool /></ColBtn>
            <ColBtn><TTool /></ColBtn>
          </ToolCol>
          <W3Canvas><ShapeCad /></W3Canvas>
        </W3Body>
        <W3Status>
          <Coord $w={150}>X=602 Y=1430</Coord>
          <Coord $w={60}>0</Coord>
          <StBtn $on $w={25}><I><path d="M3 2v11h11M3 9h5v4" stroke="#333" /></I></StBtn>
          <StBtn $w={36}><I><rect x="3" y="3" width="12" height="12" stroke="#3d7fd4" /><rect x="1" y="1" width="4" height="4" fill="#f39c5a" /></I><Caret $c="#777" /></StBtn>
          <StBtn $w={36}><I><path d="M2 4h7M5 1v7" stroke="#3d7fd4" /><rect x="5" y="9" width="10" height="4" fill="#3d7fd4" /></I><Caret $c="#777" /></StBtn>
          <StBtn $w={25}><I><rect x="6" y="1" width="7" height="7" fill="#5a9be3" /><rect x="1" y="8" width="6" height="6" fill="#5a9be3" /><circle cx="11" cy="11" r="3" fill="#f6d562" /></I></StBtn>
          <StBtn $w={36}><I><rect x="1" y="3" width="14" height="10" fill="#d6e8fb" stroke="#3d7fd4" /><path d="M6 8l2 2 3-4" stroke="#3d7fd4" /></I><Caret $c="#777" /></StBtn>
          <StBtn $w={25}><I><rect x="1" y="2" width="12" height="9" fill="#d6e8fb" stroke="#3d7fd4" /><path d="M4 6l2 2 3-4" stroke="#3d7fd4" /><circle cx="12" cy="12" r="3" fill="#f6d562" /></I></StBtn>
          <Coord $w={70}>指定第一点</Coord>
        </W3Status>
      </Win>

      <Overlay viewBox="0 0 1494 947">
        {rings.map(([cx, cy, rx, ry, c]) => <ellipse key={cx} cx={cx} cy={cy} rx={rx} ry={ry} fill="none" stroke={c} strokeWidth="1" />)}
        {arrows.map(([a, b, n, h, l], i) => <polygon key={i} points={arrowPts(a, b, n, h, l)} fill={AC} />)}
      </Overlay>
    </Page>
  );
}
